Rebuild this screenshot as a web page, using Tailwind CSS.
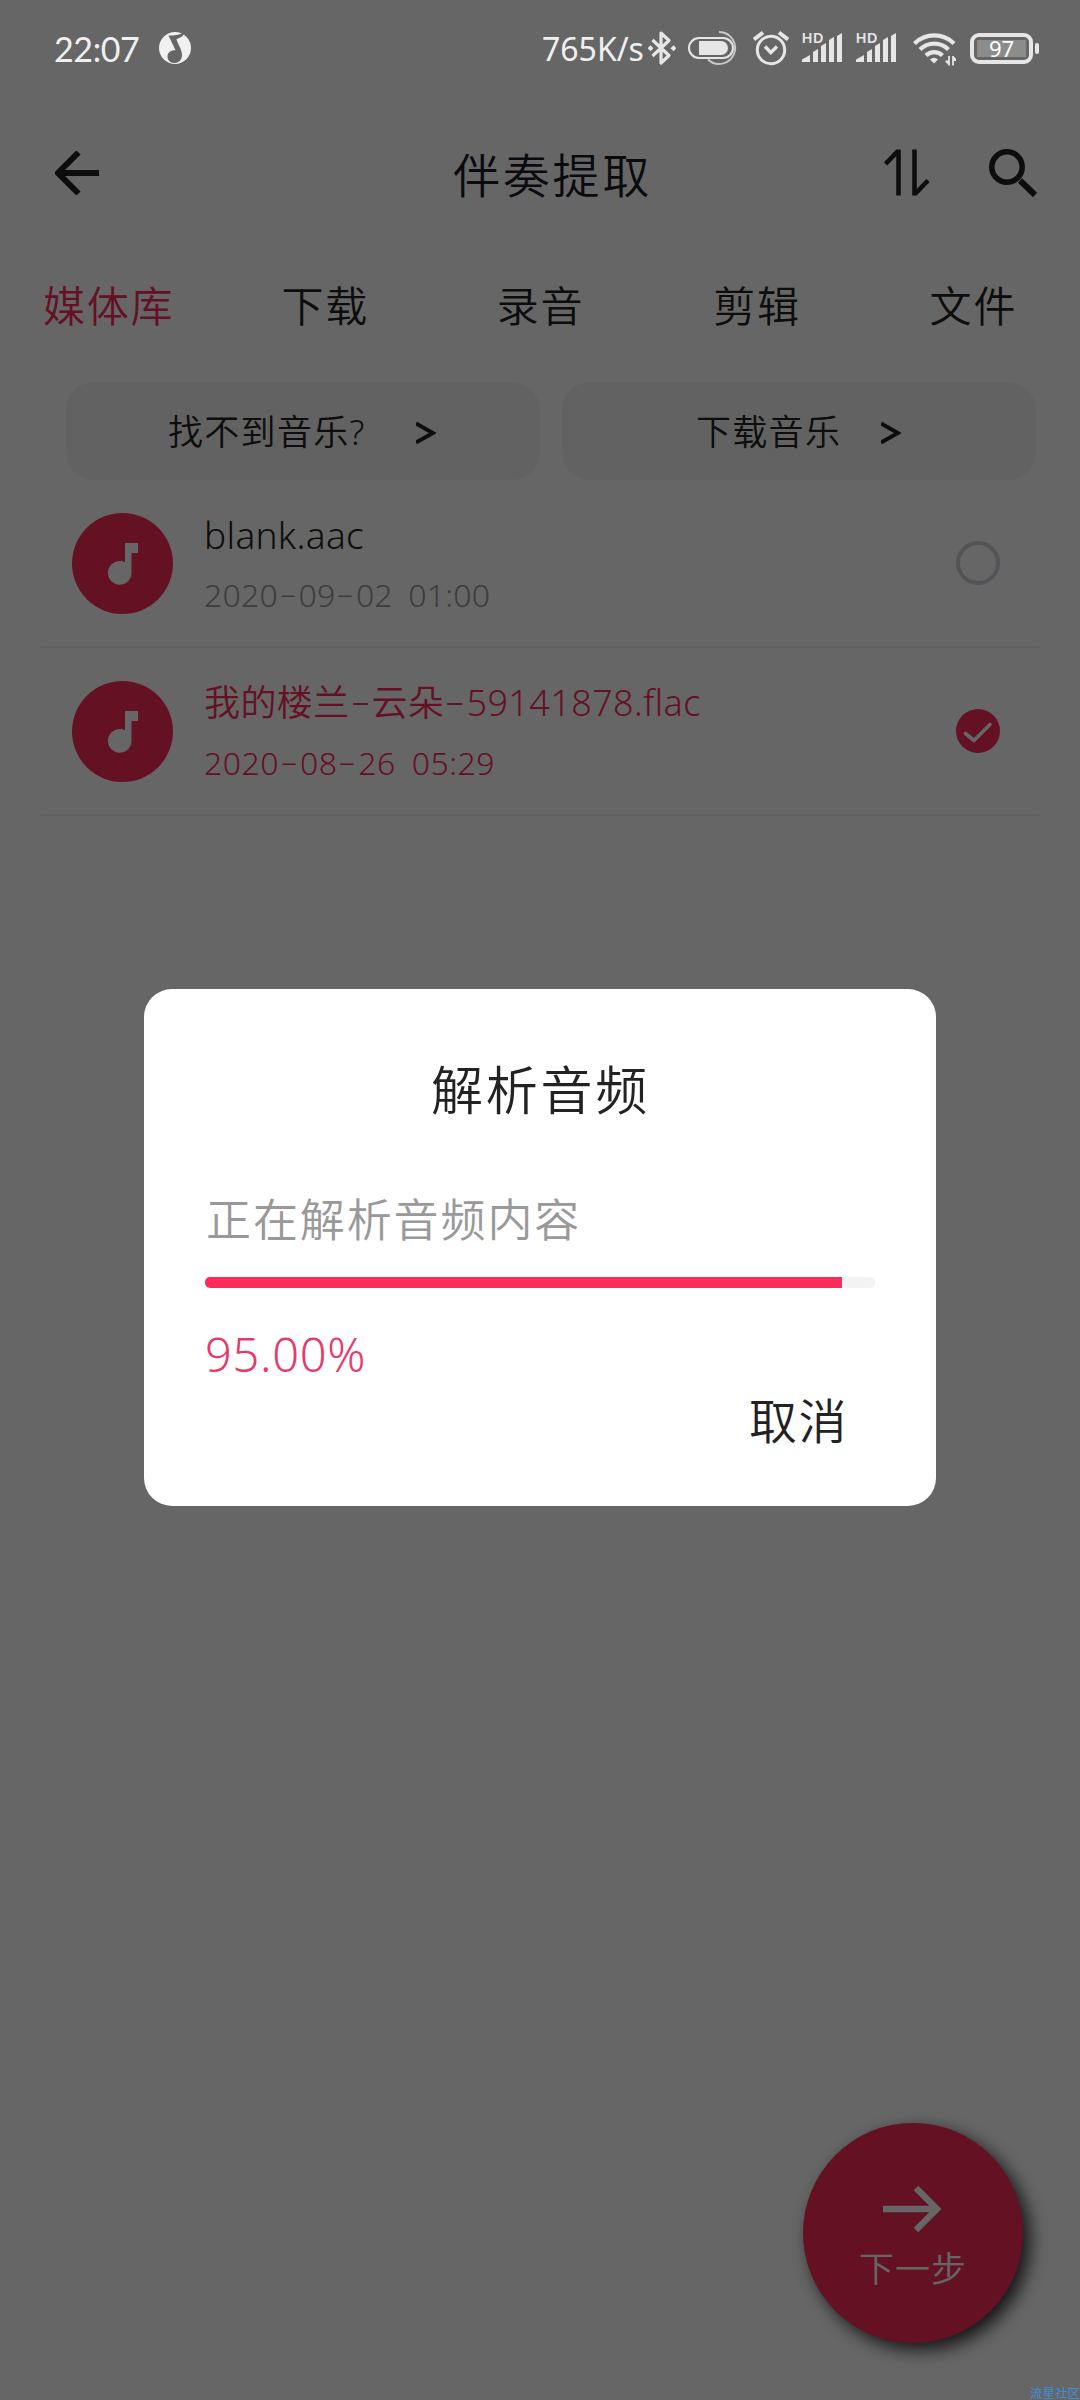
<!DOCTYPE html>
<html lang="zh-CN">
<head>
<meta charset="utf-8">
<title>伴奏提取</title>
<script src="https://cdn.jsdelivr.net/npm/@tailwindcss/browser@4"></script>
</head>
<body class="bg-white">
<div class="relative flex h-[2400px] w-[1080px] flex-col overflow-hidden bg-white font-['Noto_Sans','Noto_Sans_CJK_SC',sans-serif] font-[350] whitespace-nowrap text-[#222]">

  <header class="mt-24 flex h-[154px] items-center pr-[42px] pl-[55px]">
    <svg class="h-11 w-11" viewBox="55 151 44 44" fill="none" stroke="#222" stroke-width="6"><path d="M99 173H59M78.500 152.500 58 173l20.500 20.500"/></svg>
    <h1 class="ml-[354px] w-[399px] pt-1 text-[47px] leading-[60px] tracking-[2.800px] text-[#1a1a2a]">伴奏提取</h1>
    <svg class="ml-[32px] h-12 w-[46px]" viewBox="884 149 46 48" fill="none" stroke="#222" stroke-width="4.600"><path d="M885.500 164 897.500 151.500M898.500 149.500V195.500M914.500 149.500V195.500M915.500 193.500 928 180.500"/></svg>
    <svg class="ml-[58px] h-12 w-[50px]" viewBox="988 148 50 48" fill="none" stroke="#222"><circle cx="1007" cy="166" r="15.200" stroke-width="5.600"/><path d="M1020 179.500 1035 194" stroke-width="6"/></svg>
  </header>

  <nav class="grid h-[112px] grid-cols-5 items-center pl-[43px] text-[42px] leading-[60px] tracking-[1.800px]">
    <span class="text-[#fb2c5b]">媒体库</span><span class="pl-[31px]">下载</span><span class="pl-[39px]">录音</span><span class="pl-[48px]">剪辑</span><span class="pl-[57px]">文件</span>
  </nav>

  <div class="mt-5 grid h-[98px] grid-cols-2 gap-[22px] pr-[44px] pl-[66px]">
    <div class="flex items-center rounded-[28px] bg-[#f5f5f5] pl-[102px] text-[35px] tracking-[1.300px]">
      <span class="w-[248px] pt-[3px]">找不到音乐?</span>
      <svg class="mt-[3px] h-6 w-5" viewBox="0 0 20 24" fill="none" stroke="#222" stroke-width="4"><path d="M0 2.500 17 12 0 21.500"/></svg>
    </div>
    <div class="flex items-center rounded-[28px] bg-[#f5f5f5] pl-[134px] text-[35px] tracking-[1.300px]">
      <span class="w-[185px] pt-[3px]">下载音乐</span>
      <svg class="mt-[3px] h-6 w-5" viewBox="0 0 20 24" fill="none" stroke="#222" stroke-width="4"><path d="M0 2.500 17 12 0 21.500"/></svg>
    </div>
  </div>

  <ul class="mx-[41px]">
    <li class="flex h-[168px] items-center border-b-2 border-[#efefef] pr-[39px] pl-[31px]">
      <svg class="h-[101px] w-[101px]" viewBox="0 0 101 101"><circle cx="50.500" cy="50.500" r="50.500" fill="#fb2c5b"/><path fill="#fff" d="M53 30H66V40H59.500V60A11.800 11.800 0 1 1 53 49.300Z"/></svg>
      <div class="ml-[31px] flex flex-1 flex-col pt-[2px]">
        <span class="h-[62px] text-[37px] leading-[62px] tracking-[0.300px]">blank.aac</span>
        <span class="h-[58px] text-[32px] leading-[58px] tracking-[0.200px] [word-spacing:7px] text-[#999]">2020<span class="mx-[5px] inline-block -translate-y-0.5 scale-x-170">-</span>09<span class="mx-[5px] inline-block -translate-y-0.5 scale-x-170">-</span>02 01:00</span>
      </div>
      <svg class="h-11 w-11" viewBox="0 0 44 44"><circle cx="22" cy="22" r="20" fill="none" stroke="#d0d0dc" stroke-width="4"/></svg>
    </li>
    <li class="flex h-[168px] items-center border-b-2 border-[#efefef] pr-[39px] pl-[31px] text-[#fb2c5b]">
      <svg class="h-[101px] w-[101px]" viewBox="0 0 101 101"><circle cx="50.500" cy="50.500" r="50.500" fill="#fb2c5b"/><path fill="#fff" d="M53 30H66V40H59.500V60A11.800 11.800 0 1 1 53 49.300Z"/></svg>
      <div class="ml-[31px] flex flex-1 flex-col pt-[2px]">
        <span class="h-[62px] text-[36px] leading-[62px] tracking-[0.400px]">我的楼兰<span class="mx-[5px] inline-block -translate-y-0.5 scale-x-170">-</span>云朵<span class="mx-[5px] inline-block -translate-y-0.5 scale-x-170">-</span>59141878.flac</span>
        <span class="h-[58px] text-[32px] leading-[58px] tracking-[0.500px] [word-spacing:7px]">2020<span class="mx-[5px] inline-block -translate-y-0.5 scale-x-170">-</span>08<span class="mx-[5px] inline-block -translate-y-0.5 scale-x-170">-</span>26 05:29</span>
      </div>
      <svg class="h-11 w-11" viewBox="0 0 44 44"><circle cx="22" cy="22" r="22" fill="#fb2c5b"/><path d="M9.500 24.500 18 31.500 34 15.500" fill="none" stroke="#fff" stroke-width="3.600" stroke-linecap="round" stroke-linejoin="round"/></svg>
    </li>
  </ul>

  <button class="absolute top-[2123px] left-[803px] flex h-[220px] w-[220px] flex-col items-center rounded-full bg-[#f92b59] pt-[62px] text-white shadow-[7px_7px_18px_rgba(0,0,0,0.8)]">
    <svg class="mr-[2px] h-[48px] w-[58px]" viewBox="0 0 58 48" fill="none" stroke="#fff" stroke-width="6.500"><path d="M0 24H54M33 3 54 24 33 45"/></svg>
    <span class="mt-[11px] text-[35px] leading-[50px] tracking-[1px]">下一步</span>
  </button>

  <div class="absolute inset-0 bg-black/60"></div>

  <!-- status bar -->
  <div class="absolute inset-x-0 top-0 flex h-24 items-center pl-[54px] font-normal text-[#f0f0f0]">
    <span class="w-[105px] font-['Lato','Noto_Sans',sans-serif] text-[34px] tracking-[-0.400px]">22:07</span>
    <svg class="h-9 w-8" viewBox="159 30 32 36"><circle cx="175" cy="48" r="16" fill="#f0f0f0"/><path fill="#666" d="M168.500 35.500C174 35.500 180 35 184 32.500 184 36 181 37.500 176.500 39 177.500 44 182 49 182 55 182 60 178.500 63 174.500 63 170.500 63 167.500 60.500 167.500 56.500 167.500 52.500 171 50 175.500 50.300Z"/></svg>
    <span class="ml-[351px] w-[106px] pt-[2px] text-[32px]">765K/s</span>
    <svg class="h-9 w-[28px]" viewBox="648 30 28 36" fill="none" stroke="#e6e6e6" stroke-width="3.200"><path stroke-linejoin="round" d="M652.500 40 669 55.500 661 63V33L669 40.500 652.500 56"/><path fill="#e6e6e6" stroke="none" d="M647.500 48.300 650.500 45.300 653.500 48.300 650.500 51.300ZM670.500 48.300 673.500 45.300 676.500 48.300 673.500 51.300Z"/></svg>
    <svg class="ml-[12px] h-9 w-[50px]" viewBox="688 30 50 36" fill="none" stroke="#e6e6e6" stroke-width="2"><path stroke="#c8c8c8" d="M719 32A16 16 0 1 1 708 59.500"/><rect x="689" y="38" width="44" height="20" rx="10" fill="#666"/><path fill="#e6e6e6" stroke="none" d="M699 41H721A7 7 0 0 1 721 55H699Z"/></svg>
    <svg class="ml-[15px] h-9 w-[36px]" viewBox="753 30 36 36" fill="none" stroke="#e6e6e6" stroke-width="3"><circle cx="771" cy="50" r="13.700"/><path stroke-width="3.400" d="M765 46.500 770.800 52.500 777 46.500"/><path stroke-width="4" d="M754 39.500 763 32.500M779 32.500 788 39.500"/></svg>
    <svg class="ml-[12px] h-[46px] w-[42px]" viewBox="801 25 42 46" fill="#e6e6e6"><text x="801.500" y="43" font-size="15" font-weight="600" font-family="Noto Sans" textLength="22" lengthAdjust="spacingAndGlyphs">HD</text><path d="M802 62V59.500L810 55V62ZM813 62V52L818 49V62ZM821 62V46L826 43V62ZM829 62V40L834 37V62ZM837 62V36L842 33V62Z"/></svg>
    <svg class="ml-[12px] h-[46px] w-[42px]" viewBox="801 25 42 46" fill="#e6e6e6"><text x="801.500" y="43" font-size="15" font-weight="600" font-family="Noto Sans" textLength="22" lengthAdjust="spacingAndGlyphs">HD</text><path d="M802 62V59.500L810 55V62ZM813 62V52L818 49V62ZM821 62V46L826 43V62ZM829 62V40L834 37V62ZM837 62V36L842 33V62Z"/></svg>
    <svg class="ml-[15px] h-9 w-[44px]" viewBox="911 30 44 36" fill="none" stroke="#e6e6e6" stroke-width="4.200"><path d="M913.500 43.500A28 28 0 0 1 953 43.500M919 49.500A20 20 0 0 1 947.500 49.500M925 55.500A12 12 0 0 1 941.500 55.500"/><path fill="#e6e6e6" stroke="none" d="M929 59.500Q933 56 937 59.500L933 63.500Z"/><path stroke-width="1.800" d="M944.500 61.500 948 61.500M948 56V65.500M952 65.500V56M952 60H955M945 61 948 64M952 57 955 60"/></svg>
    <div class="ml-[14px] flex h-[31px] w-[63px] items-center justify-center rounded-[9px] border-4 border-[#e6e6e6] p-[3px]"><span class="flex h-[17px] w-full items-center justify-center bg-[#8c8c8c] text-[22px] leading-[17px] text-white">97</span></div>
    <span class="ml-[2px] h-[11px] w-1 rounded-sm bg-[#e6e6e6]"></span>
  </div>

  <!-- dialog -->
  <section class="absolute top-[989px] left-[144px] flex h-[517px] w-[792px] flex-col rounded-[28px] bg-white px-[61px]">
    <h2 class="mt-[66px] pl-[1px] text-center text-[52px] leading-[70px] tracking-[2.800px]">解析音频</h2>
    <p class="mt-[65px] h-[60px] pl-[1px] text-[45px] leading-[60px] tracking-[1.900px] text-[#999]">正在解析音频内容</p>
    <div class="mt-[27px] h-[11px] overflow-hidden rounded-[5px] bg-[#f3f3f3]"><div class="h-full bg-[#fc2c5a]" style="width:95%"></div></div>
    <p class="mt-[36px] h-[60px] text-[47px] leading-[60px] tracking-[0.700px] text-[#e83a68]">95.00%</p>
    <button class="mt-[7px] self-end pr-[27px] text-[48px] leading-[60px] tracking-[1.500px]">取消</button>
  </section>

  <span class="absolute right-0 bottom-0 text-[12.500px] leading-[13px] font-normal text-[#3f8fd8]">流星社区</span>
</div>
</body>
</html>
